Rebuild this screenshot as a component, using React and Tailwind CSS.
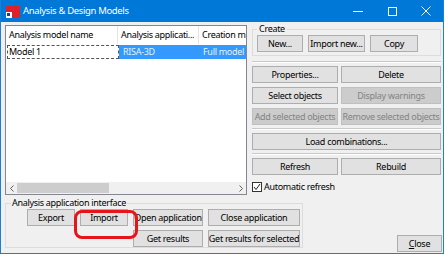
import React from 'react';

const Btn = ({ children, w, disabled, className = '' }) => (
    <div
        className={
            'h-[17px] flex items-center justify-center border whitespace-nowrap overflow-hidden ' +
            (disabled
                ? 'bg-[#cccccc] border-[#bfbfbf] text-[#838383] '
                : 'bg-[#e1e1e1] border-[#adadad] text-black ') +
            className
        }
        style={w ? { width: w } : undefined}
    >
        {children}
    </div>
);

const Sep = () => <div className="h-[2px] border-t border-[#c9c9c9] border-b border-b-white" />;

const App = () => {
    return (
        <div className="w-[445px] h-[255px] bg-white" style={{ fontFamily: '"Noto Sans", sans-serif' }}>
            <div className="w-[444px] h-[254px] border border-[#1c7fd6] border-t-0 flex flex-col bg-[#f0f0f0] text-[9px] leading-[12px] tracking-[-0.3px]">
                {/* Title bar */}
                <div className="h-[22px] bg-[#0078d7] flex items-center text-white shrink-0">
                    <svg width="14" height="12" viewBox="0 0 14 12" className="ml-[5px] mt-[1px]">
                        <rect x="0" y="0" width="14" height="12" fill="#e0202a" />
                        <rect x="0" y="6" width="6" height="6" fill="#ffffff" />
                        <rect x="1" y="7" width="3" height="3" fill="#1d3fa0" />
                    </svg>
                    <span className="ml-[3px] text-[9.5px] tracking-[-0.35px]">Analysis &amp; Design Models</span>
                    <div className="ml-auto flex items-center h-full">
                        <div className="w-[34px] flex justify-center">
                            <div className="w-[10px] h-px bg-white" />
                        </div>
                        <div className="w-[34px] flex justify-center">
                            <div className="w-[9px] h-[9px] border border-white" />
                        </div>
                        <div className="w-[34px] flex justify-center">
                            <svg width="10" height="10" viewBox="0 0 10 10">
                                <path d="M0.5 0.5 L9.5 9.5 M9.5 0.5 L0.5 9.5" stroke="white" strokeWidth="1" />
                            </svg>
                        </div>
                    </div>
                </div>

                {/* Main area */}
                <div className="flex flex-1 flex-col">
                    <div className="flex">
                        {/* List view */}
                        <div className="mt-[3px] ml-[4px] w-[242px] h-[170px] border border-[#828790] bg-white flex flex-col overflow-hidden">
                            <div className="h-[18px] flex items-center shrink-0 whitespace-nowrap">
                                <div className="w-[112px] pl-[3px] h-full flex items-center border-r border-[#e5e5e5]">Analysis model name</div>
                                <div className="w-[81px] pl-[3px] h-full flex items-center border-r border-[#e5e5e5]">Analysis applicati...</div>
                                <div className="pl-[3px]">Creation m</div>
                            </div>
                            <div className="h-[14px] mt-px flex whitespace-nowrap">
                                <div className="w-[112px] ml-px border border-dashed border-[#555] pl-px flex items-center">Model 1</div>
                                <div className="flex-1 bg-[#3399ff] text-[#e6f1fc] flex items-center">
                                    <div className="w-[81px] pl-[4px]">RISA-3D</div>
                                    <div className="pl-[3px]">Full model</div>
                                </div>
                            </div>
                            <div className="flex-1" />
                            <div className="h-[12px] bg-[#f0f0f0] flex items-center shrink-0">
                                <div className="w-[11px] flex justify-center">
                                    <svg width="4" height="7" viewBox="0 0 4 7"><path d="M3.5 0.5 L0.5 3.5 L3.5 6.5" fill="none" stroke="#606060" /></svg>
                                </div>
                                <div className="w-[92px] h-[10px] bg-[#cdcdcd]" />
                                <div className="flex-1" />
                                <div className="w-[11px] flex justify-center">
                                    <svg width="4" height="7" viewBox="0 0 4 7"><path d="M0.5 0.5 L3.5 3.5 L0.5 6.5" fill="none" stroke="#606060" /></svg>
                                </div>
                            </div>
                        </div>

                        {/* Right panel */}
                        <div className="ml-[5px] w-[189px] mt-px flex flex-col">
                            <fieldset className="border border-[#dcdcdc] pb-[3px]">
                                <legend className="ml-[4px] px-[2px]">Create</legend>
                                <div className="flex gap-[5px] pl-[4px]">
                                    <Btn w={46}>New...</Btn>
                                    <Btn w={57}>Import new...</Btn>
                                    <Btn w={48}>Copy</Btn>
                                </div>
                            </fieldset>
                            <div className="mt-[5px]"><Sep /></div>
                            <div className="mt-[3px] grid grid-cols-[86px_100px] gap-x-[3px] gap-y-[4px]">
                                <Btn>Properties...</Btn>
                                <Btn>Delete</Btn>
                                <Btn>Select objects</Btn>
                                <Btn disabled>Display warnings</Btn>
                                <Btn disabled>Add selected objects</Btn>
                                <Btn disabled>Remove selected objects</Btn>
                            </div>
                            <div className="mt-[3px]"><Sep /></div>
                            <div className="mt-[3px]"><Btn>Load combinations...</Btn></div>
                            <div className="mt-[3px]"><Sep /></div>
                            <div className="mt-[3px] grid grid-cols-[86px_100px] gap-x-[3px]">
                                <Btn>Refresh</Btn>
                                <Btn>Rebuild</Btn>
                            </div>
                            <div className="mt-[6px] flex items-center">
                                <div className="w-[10px] h-[10px] border border-[#333] bg-white flex items-center justify-center">
                                    <svg width="8" height="8" viewBox="0 0 8 8"><path d="M1 4 L3 6.5 L7 1" fill="none" stroke="#222" strokeWidth="1" /></svg>
                                </div>
                                <span className="ml-[2px]">Automatic refresh</span>
                            </div>
                        </div>
                    </div>

                    {/* Bottom row */}
                    <div className="flex flex-1">
                        <fieldset className="relative ml-[4px] mt-[2px] mb-[5px] w-[298px] border border-[#dcdcdc]">
                            <legend className="ml-[5px] px-px">Analysis application interface</legend>
                            <div className="pl-[21px] grid grid-cols-[48px_48px_70px_92px] gap-x-[5px] gap-y-[4px]">
                                <Btn>Export</Btn>
                                <Btn>Import</Btn>
                                <Btn>Open application</Btn>
                                <Btn>Close application</Btn>
                                <div />
                                <div />
                                <Btn>Get results</Btn>
                                <Btn>Get results for selected</Btn>
                            </div>
                            <div className="absolute left-[68px] top-[1px] w-[64px] h-[29px] border-[3px] border-[#e8141c] rounded-[8px]" />
                        </fieldset>
                        <div className="ml-auto mr-[1px] mb-px self-end">
                            <Btn w={45}><span><span className="underline">C</span>lose</span></Btn>
                        </div>
                    </div>
                </div>
            </div>
        </div>
    );
};

export default App;
